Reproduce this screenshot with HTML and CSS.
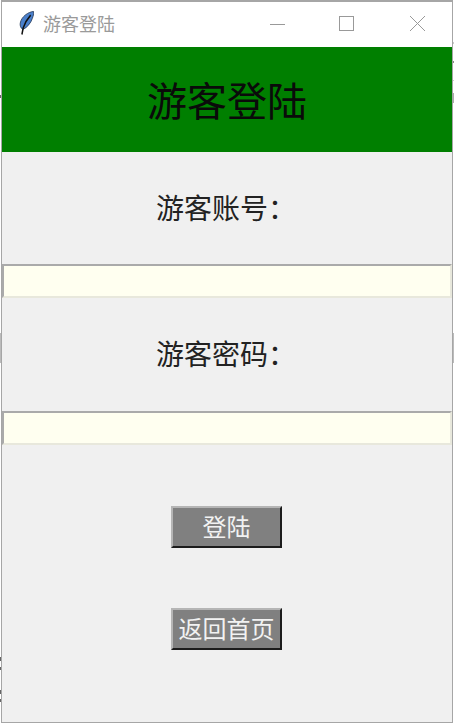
FILE: index.html
```html
<!DOCTYPE html>
<html lang="zh-CN">

<head>
    <meta charset="UTF-8">
    <title>游客登陆</title>
    <link rel="stylesheet" href="styles.css">
</head>

<body>
    <div class="edge edge-left"></div>
    <div class="edge edge-right"></div>

    <div class="window">
        <div class="titlebar">
            <svg class="feather" width="15" height="24" viewBox="0 0 18 26" preserveAspectRatio="none">
                <path d="M17.500 0.500C11 1 3 6 1.500 13C1 16 2 18.500 4.500 20C10 18 14.500 12.500 16 8C17 5.500 18 3 17.500 0.500Z" fill="#4a80cc" stroke="#2b3f5e" stroke-width="1"/>
                <path d="M14 4.500C10 8.500 7 13 5 18.500L3.500 25.500" fill="none" stroke="#111" stroke-width="1.800"/>
            </svg>
            <span class="title-text">游客登陆</span>
            <div class="controls">
                <svg class="ctl-min" width="18" height="18" viewBox="0 0 18 18"><path d="M1 9.500H16" stroke="#999" fill="none"/></svg>
                <svg class="ctl-max" width="18" height="18" viewBox="0 0 18 18"><rect x="1.500" y="1.500" width="14" height="14" stroke="#999" fill="none"/></svg>
                <svg width="18" height="18" viewBox="0 0 18 18"><path d="M1 1L16 16M16 1L1 16" stroke="#999" fill="none"/></svg>
            </div>
        </div>

        <div class="banner">游客登陆</div>

        <div class="field-label label-first">游客账号：</div>
        <input class="field" type="text">

        <div class="field-label">游客密码：</div>
        <input class="field" type="password">

        <button class="btn btn-login">登陆</button>
        <button class="btn btn-back">返回首页</button>
    </div>
</body>

</html>
```

FILE: styles.css
```css
body {
    margin: 0;
    background-color: white;
    font-family: "Noto Sans CJK SC", "Liberation Sans", sans-serif;
}

/* bits of the desktop showing either side of the window */
.edge {
    position: absolute;
    top: 0;
    width: 1px;
    height: 724px;
}

.edge-left {
    left: 0;
    background:
        linear-gradient(#666, #666) 0 95px / 1px 3px no-repeat,
        linear-gradient(#bbb, #bbb) 0 333px / 1px 30px no-repeat,
        linear-gradient(#666, #666) 0 657px / 1px 4px no-repeat,
        linear-gradient(#666, #666) 0 667px / 1px 3px no-repeat,
        linear-gradient(#666, #666) 0 690px / 1px 4px no-repeat,
        linear-gradient(#666, #666) 0 699px / 1px 3px no-repeat;
}

.edge-right {
    left: 453px;
    background:
        linear-gradient(#ccc, #ccc) 0 42px / 1px 2px no-repeat,
        linear-gradient(#888, #888) 0 61px / 1px 2px no-repeat,
        linear-gradient(#ccc, #ccc) 0 80px / 1px 1px no-repeat,
        linear-gradient(#aaa, #aaa) 0 93px / 1px 10px no-repeat,
        linear-gradient(#bbb, #bbb) 0 333px / 1px 30px no-repeat;
}

.window {
    display: flex;
    flex-direction: column;
    box-sizing: border-box;
    width: 452px;
    height: 723px;
    margin-left: 1px;
    background-color: #f0f0f0;
    border: 1px solid #a6a6a6;
    border-top-width: 2px;
    overflow: hidden;
}

.titlebar {
    display: flex;
    align-items: center;
    height: 45px;
    flex-shrink: 0;
    background-color: white;
}

.feather {
    margin: 0 9px 3px 17px;
}

.title-text {
    margin-bottom: 3px;
    font-size: 18px;
    color: #9a9a9a;
}

.controls {
    display: flex;
    margin-left: auto;
    margin-right: 25px;
    margin-bottom: 2px;
}

.ctl-min {
    margin-right: 51px;
}

.ctl-max {
    margin-right: 53px;
}

.banner {
    height: 105px;
    flex-shrink: 0;
    line-height: 105px;
    text-align: center;
    font-size: 40px;
    color: #0a0a0a;
    background-color: #007f00;
}

.field-label {
    box-sizing: border-box;
    height: 113px;
    flex-shrink: 0;
    padding-right: 2px;
    line-height: 111px;
    text-align: center;
    font-size: 28px;
    color: #222;
}

.label-first {
    height: 112px;
}

.field {
    box-sizing: border-box;
    width: 100%;
    height: 34px;
    flex-shrink: 0;
    margin: 0;
    padding: 0;
    background-color: #fffff0;
    border: 2px solid;
    border-color: #aaa #e8e8dc #e8e8dc #aaa;
    outline: none;
}

.btn {
    box-sizing: border-box;
    align-self: center;
    width: 111px;
    height: 42px;
    flex-shrink: 0;
    margin-right: 1px;
    padding: 0 0 2px;
    font-family: inherit;
    font-size: 24px;
    line-height: 1;
    color: #f2f2f2;
    background-color: #808080;
    border: 2px solid;
    border-color: #b5b5b5 #1c1c1c #1c1c1c #b5b5b5;
}

.btn-login {
    margin-top: 61px;
}

.btn-back {
    margin-top: 60px;
}
```
